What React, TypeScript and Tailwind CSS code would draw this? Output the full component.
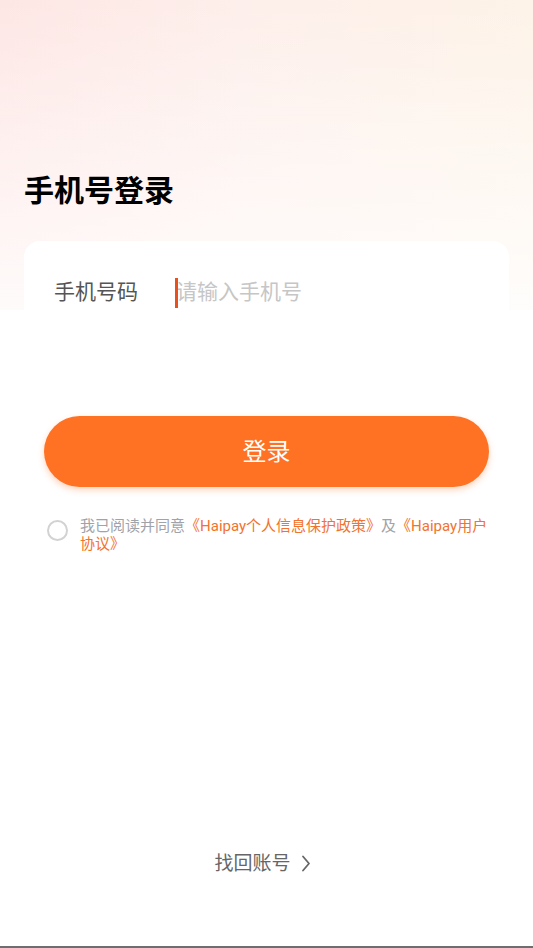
import { useState } from "react";

export default function App() {
    const [agreed, setAgreed] = useState(false);
    const [phone, setPhone] = useState("");

    return (
        <div className="relative flex h-[948px] w-full flex-col overflow-hidden bg-white bg-[linear-gradient(to_bottom,rgba(255,255,255,0)_0%,rgba(255,255,255,0.82)_100%),linear-gradient(to_right,#fde7e5_0%,#fdefeb_45%,#fdf3e8_100%)] bg-size-[100%_310px] bg-no-repeat font-['Roboto','Noto_Sans_CJK_SC',sans-serif]">
            <h1 className="ml-6 mt-[170px] text-[30px] font-bold leading-[42px] text-black">
                手机号登录
            </h1>

            <div className="mx-6 mt-[29px] flex h-[104px] items-center rounded-2xl bg-white px-[30px]">
                <span className="w-[121px] text-[21px] text-[#555]">手机号码</span>
                <div className="relative flex flex-1 items-center">
                    <span className="absolute left-0 top-1/2 h-[30px] w-[3px] -translate-y-1/2 bg-[#e8501e]" />
                    <input
                        value={phone}
                        onChange={(e) => setPhone(e.target.value)}
                        placeholder="请输入手机号"
                        className="w-full bg-transparent pl-[1px] text-[21px] text-[#333] caret-transparent outline-none placeholder:text-[#c6c6c6]"
                    />
                </div>
            </div>

            <button className="mx-11 mt-[71px] h-[71px] rounded-full bg-[#ff7123] text-[24px] text-white shadow-[0_3px_6px_rgba(255,113,35,0.3)]">
                登录
            </button>

            <div className="ml-[47px] mt-[30px] flex items-start gap-3">
                <button
                    onClick={() => setAgreed(!agreed)}
                    className={`mt-[3px] h-[21px] w-[21px] shrink-0 rounded-full border-2 ${agreed ? "border-[#ff7123] bg-[#ff7123]" : "border-[#d2d2d2] bg-white"}`}
                />
                <p className="w-[414px] text-[15px] leading-[18px] text-[#a0a3a9]">
                    我已阅读并同意
                    <span className="text-[#f2732e]">《Haipay个人信息保护政策》</span>
                    及
                    <span className="text-[#f2732e]">《Haipay用户协议》</span>
                </p>
            </div>

            <div className="mt-auto mb-[68px] flex items-center justify-center gap-[10px] pr-2 text-[19px] text-[#666]">
                <span>找回账号</span>
                <svg width="10" height="17" viewBox="0 0 10 17" fill="none">
                    <path d="M2 1.5 L8 8.5 L2 15.5" stroke="#666" strokeWidth="1.8" strokeLinecap="round" strokeLinejoin="round" />
                </svg>
            </div>

            <div className="h-[2px] w-full bg-[#6e6e6e]" />
        </div>
    );
}
